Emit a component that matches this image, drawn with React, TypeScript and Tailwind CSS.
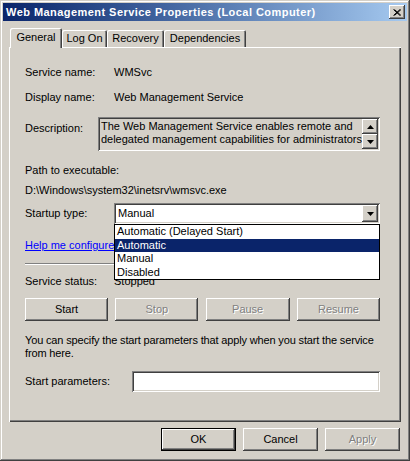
import React from 'react';

const raised =
  'shadow-[inset_-1px_-1px_#404040,inset_1px_1px_#ffffff,inset_-2px_-2px_#808080,inset_2px_2px_#d4d0c8]';
const sunken =
  'shadow-[inset_1px_1px_#808080,inset_-1px_-1px_#ffffff,inset_2px_2px_#404040,inset_-2px_-2px_#d4d0c8]';
const disabledText = 'text-[#808080] [text-shadow:1px_1px_0_#ffffff]';

const Arrow: React.FC<{ up?: boolean }> = ({ up }) => (
  <svg width="7" height="4" viewBox="0 0 7 4" className={up ? 'rotate-180' : ''}>
    <path d="M0 0h7L3.5 4z" fill="#000" />
  </svg>
);

const ClassicButton: React.FC<{
  label: string;
  width: string;
  disabled?: boolean;
  isDefault?: boolean;
}> = ({ label, width, disabled, isDefault }) => (
  <div
    className={`${width} h-[23px] flex items-center justify-center bg-[#d4d0c8] ${
      isDefault ? 'border border-black' : ''
    }`}
  >
    <div className={`w-full h-full flex items-center justify-center ${raised}`}>
      <span className={disabled ? disabledText : 'text-black'}>{label}</span>
    </div>
  </div>
);

const Tab: React.FC<{ label: string; width: string; active?: boolean }> = ({ label, width, active }) => (
  <div
    className={`${width} flex items-center justify-center bg-[#d4d0c8] rounded-t-[2px] shadow-[inset_1px_1px_#ffffff,inset_-1px_0_#404040,inset_-2px_0_#808080] ${
      active ? 'h-[20px] -mb-px relative z-10 pb-[2px]' : 'h-[17px]'
    }`}
  >
    {label}
  </div>
);

export default function App() {
  const options = ['Automatic (Delayed Start)', 'Automatic', 'Manual', 'Disabled'];

  return (
    <div
      className={`w-[410px] h-[461px] p-[3px] bg-[#d4d0c8] text-[11px] leading-[13px] text-black font-['Liberation_Sans',Arial,sans-serif] shadow-[inset_-1px_-1px_#404040,inset_1px_1px_#d4d0c8,inset_-2px_-2px_#808080,inset_2px_2px_#ffffff] overflow-hidden`}
    >
      {/* title bar */}
      <div className="h-[18px] flex items-center justify-between bg-gradient-to-r from-[#0a246a] to-[#a6caf0] pl-[3px] pr-[2px]">
        <span className="text-white font-bold text-[11px] tracking-[0.45px]">
          Web Management Service Properties (Local Computer)
        </span>
        <div className={`w-[16px] h-[14px] bg-[#d4d0c8] flex items-center justify-center ${raised}`}>
          <svg width="8" height="7" viewBox="0 0 8 7">
            <path d="M0.5 0.5L7 6.5M1.5 0.5L8 6.5M7 0.5L0.5 6.5M8 0.5L1.5 6.5" stroke="#000" strokeWidth="1" />
          </svg>
        </div>
      </div>

      {/* tabs */}
      <div className="mt-[7px] mx-[6px] h-[19px] flex items-end pl-[1px]">
        <Tab label="General" width="w-[52px]" active />
        <Tab label="Log On" width="w-[45px]" />
        <Tab label="Recovery" width="w-[57px]" />
        <Tab label="Dependencies" width="w-[82px]" />
      </div>

      {/* panel */}
      <div className="mx-[6px] h-[375px] relative shadow-[inset_1px_1px_#ffffff,inset_-1px_-1px_#404040,inset_-2px_-2px_#808080] pt-[19px] pl-[16px] pr-[21px]">
        <div className="flex h-[13px]">
          <span className="w-[89px]">Service name:</span>
          <span>WMSvc</span>
        </div>
        <div className="flex h-[13px] mt-[12px]">
          <span className="w-[89px]">Display name:</span>
          <span>Web Management Service</span>
        </div>

        <div className="flex mt-[13px]">
          <span className="w-[89px] mt-[5px]">Description:</span>
          <div className={`flex-1 h-[34px] flex p-[2px] ${sunken}`}>
            <div className="flex-1 overflow-hidden whitespace-nowrap pl-[1px] pt-[1px]">
              <div>The Web Management Service enables remote and</div>
              <div>delegated management capabilities for administrators</div>
            </div>
            <div className="w-[16px] flex flex-col">
              <div className={`h-[15px] flex items-center justify-center ${raised}`}>
                <Arrow up />
              </div>
              <div className={`h-[15px] flex items-center justify-center ${raised}`}>
                <Arrow />
              </div>
            </div>
          </div>
        </div>

        <div className="mt-[13px] h-[13px]">Path to executable:</div>
        <div className="mt-[7px] h-[13px]">D:\Windows\system32\inetsrv\wmsvc.exe</div>

        <div className="flex items-center mt-[6px] relative">
          <span className="w-[89px]">Startup type:</span>
          <div className={`flex-1 h-[21px] bg-white flex items-center p-[2px] ${sunken}`}>
            <span className="flex-1 pl-[2px]">Manual</span>
            <div className={`w-[16px] h-[17px] bg-[#d4d0c8] flex items-center justify-center ${raised}`}>
              <Arrow />
            </div>
          </div>
          {/* open list */}
          <div className="absolute left-[89px] right-0 top-[21px] z-20 bg-white border border-black">
            {options.map(o => (
              <div
                key={o}
                className={`h-[13.5px] pl-[2px] leading-[13px] ${
                  o === 'Automatic' ? 'bg-[#0a246a] text-white' : ''
                }`}
              >
                {o}
              </div>
            ))}
          </div>
        </div>

        <div className="mt-[15px] h-[13px] whitespace-nowrap">
          <span className="text-[#0000ff] underline">Help me configure</span>
        </div>

        <div className="mt-[11px] border-t border-t-[#808080] border-b border-b-white" />

        <div className="flex h-[13px] mt-[10px]">
          <span className="w-[89px]">Service status:</span>
          <span>Stopped</span>
        </div>

        <div className="flex justify-between mt-[10px]">
          <ClassicButton label="Start" width="w-[83px]" />
          <ClassicButton label="Stop" width="w-[83px]" disabled />
          <ClassicButton label="Pause" width="w-[84px]" disabled />
          <ClassicButton label="Resume" width="w-[83px]" disabled />
        </div>

        <p className="mt-[13px] whitespace-nowrap tracking-[-0.15px]">
          You can specify the start parameters that apply when you start the service
          <br />
          from here.
        </p>

        <div className="flex items-center mt-[11px]">
          <span className="w-[107px]">Start parameters:</span>
          <div className={`flex-1 h-[21px] bg-white ${sunken}`} />
        </div>
      </div>

      {/* bottom buttons */}
      <div className="flex justify-end gap-[7px] mt-[6px] mr-[7px]">
        <ClassicButton label="OK" width="w-[75px]" isDefault />
        <ClassicButton label="Cancel" width="w-[75px]" />
        <ClassicButton label="Apply" width="w-[75px]" disabled />
      </div>
    </div>
  );
}
